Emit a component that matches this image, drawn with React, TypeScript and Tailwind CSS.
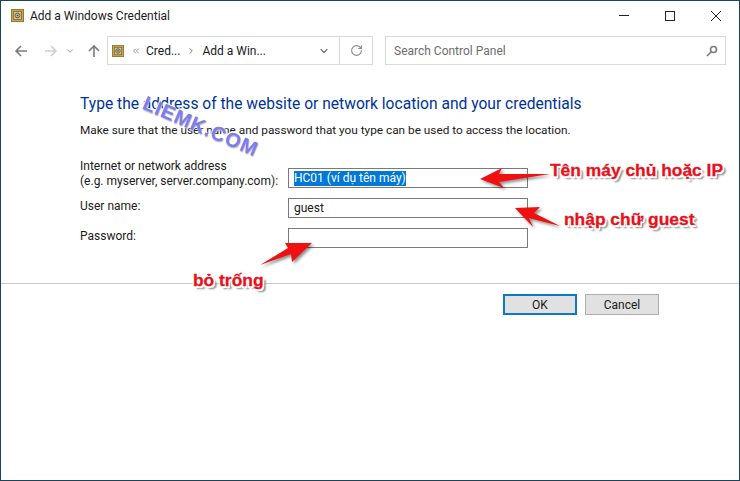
import { ChevronDown, ChevronRight, ChevronsLeft, RotateCw } from "lucide-react";

function SafeIcon({ size = 13 }: { size?: number }) {
  return (
    <svg width={size} height={size} viewBox="0 0 13 13" className="shrink-0">
      <rect x="0.5" y="0.5" width="12" height="12" fill="#c9a64f" stroke="#8f7a3a" />
      <rect x="2.5" y="2.5" width="8" height="8" fill="#d9c387" stroke="#7c6a33" strokeWidth="0.8" />
      <circle cx="6.5" cy="6.5" r="2.4" fill="#b9b39a" stroke="#5e5a48" strokeWidth="0.9" />
      <circle cx="6.5" cy="6.5" r="0.8" fill="#4c4a3c" />
    </svg>
  );
}

function NavArrow({ dir, color }: { dir: "left" | "right" | "up"; color: string }) {
  const d = dir === "left" ? "M13 7H2M7 2 2 7l5 5" : dir === "right" ? "M1 7h11M7 2l5 5-5 5" : "M7 13V2M2 7l5-5 5 5";
  return (
    <svg width="14" height="14" viewBox="0 0 14 14" fill="none" stroke={color} strokeWidth="1.6">
      <path d={d} />
    </svg>
  );
}

function Field({ label, inputTop = 0, children }: { label: React.ReactNode; inputTop?: number; children?: React.ReactNode }) {
  return (
    <div className="flex items-start">
      <div className="-mb-[1px] w-[208px] whitespace-nowrap pt-[1px] text-[12px] leading-[15px] text-[#1a1a1a]">{label}</div>
      <div
        className="flex h-[20px] w-[240px] items-center border border-[#7a7a7a] bg-white pl-[5px] text-[12px] text-[#1a1a1a]"
        style={{ marginTop: inputTop }}
      >
        {children}
      </div>
    </div>
  );
}

const noteText =
  "font-['Liberation_Sans',sans-serif] text-[17.4px] font-bold leading-none text-[#e8101a] whitespace-nowrap [-webkit-text-stroke:0.3px_#e8101a] [text-shadow:1.5px_1.5px_0_#fff,-1.5px_-1.5px_0_#fff,1.5px_-1.5px_0_#fff,-1.5px_1.5px_0_#fff,3px_3px_2px_#777]";

export default function App() {
  return (
    <div className="relative flex h-[481px] w-[740px] flex-col overflow-hidden border border-[#17455f] bg-white font-['Roboto','Open_Sans',sans-serif]">
      {/* title bar */}
      <div className="flex h-[29px] shrink-0 items-center pl-[10px]">
        <SafeIcon />
        <span className="ml-[6px] text-[12px] text-[#1a1a1a]">Add a Windows Credential</span>
        <div className="ml-auto flex items-center">
          <div className="flex w-[46px] justify-center">
            <div className="h-px w-[10px] bg-[#222]" />
          </div>
          <div className="flex w-[46px] justify-center">
            <div className="h-[10px] w-[10px] border border-[#222]" />
          </div>
          <div className="flex w-[46px] justify-center">
            <svg width="10" height="10" viewBox="0 0 10 10" stroke="#222" strokeWidth="1">
              <path d="M0 0l10 10M10 0 0 10" />
            </svg>
          </div>
        </div>
      </div>

      {/* nav row */}
      <div className="mt-[6px] flex h-[29px] shrink-0 items-center pl-[13px] pr-[13px]">
        <NavArrow dir="left" color="#7b7b7b" />
        <div className="ml-[16px]">
          <NavArrow dir="right" color="#d0d0d0" />
        </div>
        <ChevronDown size={10} strokeWidth={2.4} className="ml-[7px] text-[#a0a0a0]" />
        <div className="ml-[12px]">
          <NavArrow dir="up" color="#7b7b7b" />
        </div>
        <div className="ml-[6px] flex h-[29px] w-[266px] items-center border border-[#d9d9d9]">
          <div className="flex min-w-0 flex-1 items-center pl-[4px]">
            <SafeIcon size={12} />
            <ChevronsLeft size={10} className="ml-[7px] text-[#808080]" />
            <span className="ml-[5px] text-[12px] text-[#1a1a1a]">Cred...</span>
            <ChevronRight size={10} strokeWidth={2.4} className="ml-[6px] text-[#808080]" />
            <span className="ml-[6px] text-[12px] text-[#1a1a1a]">Add a Win...</span>
            <ChevronDown size={12} strokeWidth={2.4} className="ml-auto mr-[9px] text-[#707070]" />
          </div>
          <div className="flex h-full w-[33px] items-center justify-center border-l border-[#d9d9d9]">
            <RotateCw size={13} className="text-[#8a8a8a]" />
          </div>
        </div>
        <div className="ml-[12px] flex h-[29px] flex-1 items-center justify-between border border-[#d9d9d9] pl-[8px] pr-[7px]">
          <span className="text-[12px] text-[#6d6d6d]">Search Control Panel</span>
          <svg width="12" height="12" viewBox="0 0 12 12" fill="none" stroke="#7a7a7a" strokeWidth="1.6">
            <circle cx="7.5" cy="4.5" r="3" />
            <path d="M5.3 6.7 1 11" />
          </svg>
        </div>
      </div>

      {/* content */}
      <div className="flex flex-1 flex-col">
        <div className="pl-[79px] pt-[29px]">
          <h1 className="text-[15.6px] font-normal leading-[20px] text-[#003399]">
            Type the address of the website or network location and your credentials
          </h1>
          <p className="mt-[8px] text-[11.8px] leading-[16px] text-[#1a1a1a]">
            Make sure that the user name and password that you type can be used to access the location.
          </p>
          <div className="mt-[20px] flex flex-col gap-[10px]">
            <Field
              inputTop={10}
              label={
                <>
                  Internet or network address
                  <br />
                  (e.g. myserver, server.company.com):
                </>
              }
            >
              <span className="bg-[#0078d7] leading-[15px] text-white">HC01 (ví dụ tên máy)</span>
            </Field>
            <Field label="User name:">guest</Field>
            <Field label="Password:" />
          </div>
        </div>

        <div className="mt-[35px] h-px bg-[#c8c8c8]" />

        <div className="flex justify-end gap-[8px] pr-[80px] pt-[10px]">
          <button className="h-[21px] w-[74px] border-2 border-[#0f78c4] bg-[#e1e1e1] text-[12px] text-[#1a1a1a]">
            OK
          </button>
          <button className="h-[21px] w-[74px] border border-[#adadad] bg-[#e1e1e1] text-[12px] text-[#1a1a1a]">
            Cancel
          </button>
        </div>
      </div>

      {/* annotations drawn over the dialog */}
      <svg
        width="740"
        height="481"
        className="pointer-events-none absolute left-[-1px] top-[-1px] drop-shadow-[2px_2px_1.5px_rgba(0,0,0,0.45)]"
      >
        <polygon points="480,179 502,168 499,174 550,174 499,182 504,188" fill="#f01010" />
        <polygon points="515,208 540,207 534,213 560,226 529,218 533,227" fill="#f01010" />
        <polygon points="312,243 285,243 288,248 260,265 291,254 292,262" fill="#f01010" />
      </svg>
      <span className={`absolute left-[549px] top-[161px] ${noteText}`}>Tên máy chủ hoặc IP</span>
      <span className={`absolute left-[563px] top-[210px] ${noteText}`}>nhập chữ guest</span>
      <span className={`absolute left-[192px] top-[271px] ${noteText}`}>bỏ trống</span>
      <span className="absolute left-[138px] top-[115px] rotate-[23deg] font-['Liberation_Sans',sans-serif] text-[20px] font-bold leading-none tracking-[1px] text-[#7d7df0] [text-shadow:1px_1px_1px_#bbb,-1px_-1px_0_#fff]">
        LIEMK.COM
      </span>
    </div>
  );
}
